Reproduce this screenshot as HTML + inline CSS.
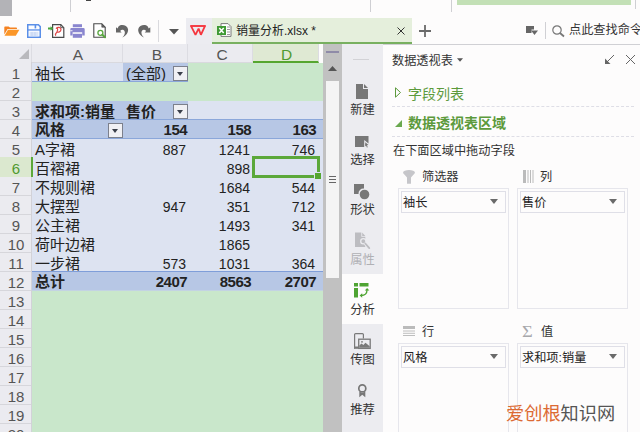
<!DOCTYPE html>
<html lang="zh-CN">
<head>
<meta charset="utf-8">
<title>销量分析.xlsx</title>
<style>
*{box-sizing:border-box;margin:0;padding:0}
html,body{width:640px;height:432px;overflow:hidden;background:#fdfcfc}
body{position:relative;font-family:"Liberation Sans","Noto Sans CJK SC",sans-serif;color:#222;font-size:12px}
.abs{position:absolute}
svg{position:absolute;overflow:visible}
/* ---------- top toolbar ---------- */
#top{left:0;top:0;width:640px;height:44px;background:#fdfcfc}
.vl{position:absolute;width:1px;background:#cfcfd3}
/* ---------- sheet ---------- */
#sheet{left:0;top:44px;width:323px;height:388px;background:#c9e7cb;overflow:hidden}
#colhead{left:0;top:0;width:323px;height:19px;background:#ebebf0;border-bottom:1px solid #d9d9de}
.ch{position:absolute;top:0;height:18px;line-height:22px;text-align:center;padding-left:2px;font-size:15.500px;color:#555;border-right:1px solid #dcdce2;overflow:hidden}
#rowhead{left:0;top:18px;width:32px;height:370px;background:#ebebf0;border-right:1px solid #d2d2d8}
.rh{position:absolute;left:0;width:31px;height:19px;line-height:22px;text-align:center;padding-left:1px;font-size:15px;color:#555;border-bottom:1px solid #d6d6db;overflow:hidden}
.row{position:absolute;left:32px;height:19px;line-height:21px;font-size:15px;white-space:nowrap}
.c{position:absolute;top:0;height:19px;padding:0 3px;overflow:hidden}
.n{text-align:right;font-size:14px;padding-right:1px;padding-top:1px}
.b{font-weight:bold}
.bn .n{font-size:15px;letter-spacing:-0.550px;padding-top:0;transform:translateX(1px)}
.lt{background:#dde3f1}
.dk{background:#b7c7e5}
.dd{position:absolute;width:15px;height:15px;top:3px;border:1px solid #7c808c;background:#f0f0f4}
.dd:after{content:"";position:absolute;left:2.700px;top:5px;border:3.800px solid transparent;border-top:4.200px solid #3a3f4a;border-bottom:0}
/* ---------- scrollbar ---------- */
#vs{left:323px;top:44px;width:19px;height:388px;background:#c1c1c1}
/* ---------- side strip ---------- */
#side{left:342px;top:44px;width:41px;height:388px;background:#ececf0}
.sl{position:absolute;left:0;width:41px;text-align:center;font-size:12.300px;line-height:14px;color:#333}
/* ---------- panel ---------- */
#panel{left:383px;top:44px;width:257px;height:388px;background:#fdfcfc;border-top:1px solid #d0d0d4}
.t12{position:absolute;font-size:12.200px;line-height:14px;color:#333;white-space:nowrap}
.g14{position:absolute;font-size:14px;line-height:16px;color:#5c9a3c;white-space:nowrap}
.dash{position:absolute;height:0;border-top:1px dashed #dedee6}
.box{position:absolute;border:1px solid #e6e6ec}
.item{position:absolute;left:2px;right:2px;top:2px;height:22px;border:1px solid #dfdfe7;font-size:12.200px;line-height:23px;padding-left:1px;color:#222}
.item:after{content:"";position:absolute;right:7px;top:7px;border:4.5px solid transparent;border-top:5px solid #6a6a6a;border-bottom:0}
</style>
</head>
<body>

<!-- ================= TOP ================= -->
<div id="top" class="abs">
  <div class="abs" style="left:0;top:0;width:12px;height:16px;background:#b3b3b7"></div>
  <div class="vl" style="left:70px;top:0;height:12px"></div>
  <div class="vl" style="left:370px;top:0;height:12px"></div>
  <div class="vl" style="left:451px;top:0;height:12px"></div>
  <div class="vl" style="left:635px;top:0;height:9px"></div>
  <div class="abs" style="left:457px;top:0;width:174px;height:5px;background:#c3e0b6"></div>
  <div class="abs" style="left:86px;top:0;width:5px;height:1px;background:#444"></div>

  <!-- folder -->
  <svg style="left:4px;top:26px" width="16" height="11" viewBox="0 0 16 11"><path d="M0.300 1.200Q0.300 0.400 1.100 0.400H4.600L6 1.600H12.200Q13 1.600 13 2.400V3H3.600L0.300 8.600z" fill="#f58220"/><path d="M4 3.700H15.400L11.800 9.800H0.500z" fill="#fb9628"/></svg>
  <!-- save -->
  <svg style="left:27px;top:24px" width="14" height="14" viewBox="0 0 14 14"><path d="M0.750 0.750H11.400L13.250 2.600V13.250H0.750z" fill="#fbfcff" stroke="#5b8fe8" stroke-width="1.500"/><rect x="0.750" y="5.300" width="12.500" height="1.300" fill="#5b8fe8"/><rect x="7.600" y="1" width="1.600" height="3.400" fill="#5b8fe8"/><rect x="2.600" y="7.800" width="8.800" height="4.400" fill="#d9e4f8"/><path d="M5 8v4M8 8v4" stroke="#c3d3f3" stroke-width="1"/></svg>
  <!-- pdf -->
  <svg style="left:48px;top:24px" width="17" height="14" viewBox="0 0 17 14"><path d="M4.600 0.700h8.200l3 3v9.600H4.600z" fill="#fff" stroke="#4a4a4a" stroke-width="1.200"/><path d="M12.800 0.700v3h3" fill="none" stroke="#4a4a4a" stroke-width="0.900"/><path d="M8.300 4.300C9.500 2.800 13 3 13 5.600 13 8 10 8.600 9 8 9.500 6.800 9.800 5.500 9.600 4.600M9 8C8 9 7 10 7.600 11.300" fill="none" stroke="#e04848" stroke-width="1.200" stroke-linecap="round"/><path d="M0 3.600h2.600V2.200l2.700 2.300-2.700 2.300V5.400H0z" fill="#4aa63c"/></svg>
  <!-- printer -->
  <svg style="left:70px;top:24px" width="15" height="14" viewBox="0 0 15 14"><rect x="2.800" y="0.200" width="9.200" height="3" fill="#8a86cf"/><path d="M1.400 3.900H13.400Q14.700 3.900 14.700 5.200V11.600H12.200V8.200H2.600V11.600H0.300V5.200Q0.300 3.900 1.400 3.900z" fill="#8a86cf"/><rect x="2.800" y="9.800" width="9.200" height="4" fill="#8a86cf"/><rect x="0.300" y="6.300" width="2.200" height="0.900" fill="#fdfcfc"/></svg>
  <!-- preview -->
  <svg style="left:93px;top:23px" width="13" height="15" viewBox="0 0 13 15"><path d="M0.800 0.800h8l3.400 3.400v10H0.800z" fill="#fff" stroke="#4a4a4a" stroke-width="1.100"/><path d="M8.800 0.800v3.400h3.400z" fill="#666" stroke="#4a4a4a" stroke-width="0.600"/><circle cx="7.400" cy="9.800" r="2.500" fill="#fff" stroke="#58a63e" stroke-width="1.300"/><path d="M9.400 11.800l2.600 2.400" stroke="#58a63e" stroke-width="2" stroke-linecap="round"/></svg>
  <!-- undo -->
  <svg style="left:116px;top:25px" width="13" height="13" viewBox="0 0 13 13"><path d="M0 2.300V7.600H5.600L4.200 5.900C5.200 4.600 7.500 4.400 8.500 6 9.500 8 8.500 10.500 6.300 12.600 10.500 10.500 12.600 7 12 4 11.300 1 7.500-.7 4.300.3 3 .8 2.300 1.600 1.600 3.400z" fill="#666"/></svg>
  <!-- redo -->
  <svg style="left:138px;top:25px" width="13" height="13" viewBox="0 0 13 13"><path transform="translate(12.300 0) scale(-1 1)" d="M0 2.300V7.600H5.600L4.200 5.900C5.200 4.600 7.500 4.400 8.500 6 9.500 8 8.500 10.500 6.300 12.600 10.500 10.500 12.600 7 12 4 11.300 1 7.500-.7 4.300.3 3 .8 2.300 1.600 1.600 3.400z" fill="#666"/></svg>
  <div class="vl" style="left:158px;top:20px;height:22px;background:#dadade"></div>
  <!-- caret -->
  <svg style="left:169px;top:29px" width="10" height="6" viewBox="0 0 10 6"><path d="M0 0h10l-5 5.500z" fill="#555"/></svg>

  <!-- wps tab -->
  <div class="abs" style="left:186px;top:18px;width:26px;height:26px;background:#ececf1"></div>
  <svg style="left:190px;top:25px" width="16" height="11" viewBox="0 0 16 11"><path d="M0.200 1H15.800" fill="none" stroke="#f5363f" stroke-width="1.900"/><path d="M1.200 1.300L5.500 9.800 8.600 3.600 10.900 9.800 14.800 1.300" fill="none" stroke="#f5363f" stroke-width="1.800" stroke-linejoin="miter" stroke-miterlimit="2"/></svg>

  <!-- file tab -->
  <div class="abs" style="left:212px;top:18px;width:200px;height:26px;background:#e5efdc;border-bottom:2px solid #78b060"></div>
  <svg style="left:217px;top:23px" width="15" height="15" viewBox="0 0 15 15"><path d="M4 0.600h7l3 3v9.800H4z" fill="#fff" stroke="#7a7a7a" stroke-width="1"/><path d="M10 4h3M10 6.500h3M10 9h3M10 11.500h3" stroke="#9a9a9a" stroke-width="1"/><rect x="0" y="3" width="9" height="9" fill="#3f9a34"/><path d="M2.300 5l4.400 5M6.700 5l-4.400 5" stroke="#fff" stroke-width="1.500"/></svg>
  <div class="abs" style="left:236px;top:23px;font-size:12px;line-height:17px;color:#222;white-space:nowrap">销量分析.xlsx *</div>
  <svg style="left:397px;top:27px" width="8" height="8" viewBox="0 0 8 8"><path d="M0.500 0.500l7 7M7.500 0.500l-7 7" stroke="#333" stroke-width="1"/></svg>
  <!-- plus -->
  <svg style="left:419px;top:25px" width="12" height="12" viewBox="0 0 12 12"><path d="M6 0v12M0 6h12" stroke="#6a6a6a" stroke-width="1.800"/></svg>

  <!-- right side -->
  <svg style="left:526px;top:26px" width="12" height="9" viewBox="0 0 12 9"><path d="M0 0h8v3.500H5.500V7H0z" fill="#666"/><path d="M5 4.500h7L8.500 9z" fill="#666"/></svg>
  <div class="vl" style="left:545px;top:22px;height:17px;background:#d0d0d4"></div>
  <svg style="left:552px;top:25px" width="13" height="12" viewBox="0 0 13 12"><circle cx="5" cy="5" r="4.200" fill="none" stroke="#777" stroke-width="1.200"/><path d="M8 8l4 3.500" stroke="#777" stroke-width="1.800"/></svg>
  <div class="t12" style="left:569px;top:23px;color:#333">点此查找命令</div>
</div>

<!-- ================= SHEET ================= -->
<div id="sheet" class="abs">
  <div id="colhead" class="abs">
    <div class="ch" style="left:0;width:32px"></div>
    <div class="ch" style="left:32px;width:91px">A</div>
    <div class="ch" style="left:123px;width:65px;padding-left:4px">B</div>
    <div class="ch" style="left:188px;width:65px;padding-left:4px">C</div>
    <div class="ch" style="left:253px;width:66px;background:#dfe9d3;color:#4f9a2f;border-bottom:2px solid #55a630;height:19px">D</div>
    <div class="abs" style="left:319px;top:0;width:4px;height:19px;background:#fdfcfc"></div>
    <svg style="left:19px;top:5px" width="10" height="10" viewBox="0 0 10 10"><path d="M10 0v10H0z" fill="#b9b9bd"/></svg>
  </div>

  <div id="rowhead" class="abs">
    <div class="rh" style="top:1px">1</div>
    <div class="rh" style="top:20px">2</div>
    <div class="rh" style="top:39px">3</div>
    <div class="rh" style="top:58px">4</div>
    <div class="rh" style="top:77px">5</div>
    <div class="rh" style="top:95px;height:20px;line-height:24px;background:#dbe8cf;color:#4f9a2f;border-bottom:0">6</div>
    <div class="rh" style="top:115px">7</div>
    <div class="rh" style="top:134px">8</div>
    <div class="rh" style="top:153px">9</div>
    <div class="rh" style="top:172px">10</div>
    <div class="rh" style="top:191px">11</div>
    <div class="rh" style="top:210px">12</div>
    <div class="rh" style="top:229px">13</div>
    <div class="rh" style="top:248px">14</div>
    <div class="rh" style="top:267px">15</div>
    <div class="rh" style="top:286px">16</div>
    <div class="rh" style="top:305px">17</div>
    <div class="rh" style="top:324px">18</div>
    <div class="rh" style="top:343px">19</div>
    <div class="rh" style="top:362px">20</div>
  </div>

  <!-- row 1 -->
  <div class="row" style="top:19px;width:156px">
    <div class="c lt" style="left:0;width:91px;border-bottom:1px solid #8ba7da">袖长</div>
    <div class="c dk" style="left:91px;width:65px;border-bottom:1px solid #8ba7da">(全部)<span class="dd" style="left:50px"></span></div>
  </div>
  <!-- row 3 -->
  <div class="row b" style="top:57px;width:291px">
    <div class="c dk" style="left:0;width:91px">求和项:销量</div>
    <div class="c dk" style="left:91px;width:65px">售价<span class="dd" style="left:50px"></span></div>
    <div class="c lt" style="left:156px;width:135px"></div>
  </div>
  <!-- row 4 -->
  <div class="row b dk bn" style="top:75px;height:20px;width:291px;border-top:1px solid #8ba7da;border-bottom:1px solid #8ba7da;line-height:20px">
    <div class="c" style="left:0;width:91px">风格<span class="dd" style="left:76px;top:3px"></span></div>
    <div class="c n" style="left:91px;width:65px;padding-right:2px">154</div>
    <div class="c n" style="left:156px;width:65px;padding-right:3px">158</div>
    <div class="c n" style="left:221px;width:70px;padding-right:8px">163</div>
  </div>
  <!-- rows 5-11 -->
  <div class="row lt" style="top:95px;width:291px"><div class="c" style="left:0;width:91px">A字裙</div><div class="c n" style="left:91px;width:65px;padding-right:2px">887</div><div class="c n" style="left:156px;width:65px;padding-right:3px">1241</div><div class="c n" style="left:221px;width:70px;padding-right:8px">746</div></div>
  <div class="row lt" style="top:114px;width:291px"><div class="c" style="left:0;width:91px">百褶裙</div><div class="c n" style="left:156px;width:65px;padding-right:3px">898</div></div>
  <div class="row lt" style="top:133px;width:291px"><div class="c" style="left:0;width:91px">不规则裙</div><div class="c n" style="left:156px;width:65px;padding-right:3px">1684</div><div class="c n" style="left:221px;width:70px;padding-right:8px">544</div></div>
  <div class="row lt" style="top:152px;width:291px"><div class="c" style="left:0;width:91px">大摆型</div><div class="c n" style="left:91px;width:65px;padding-right:2px">947</div><div class="c n" style="left:156px;width:65px;padding-right:3px">351</div><div class="c n" style="left:221px;width:70px;padding-right:8px">712</div></div>
  <div class="row lt" style="top:171px;width:291px"><div class="c" style="left:0;width:91px">公主裙</div><div class="c n" style="left:156px;width:65px;padding-right:3px">1493</div><div class="c n" style="left:221px;width:70px;padding-right:8px">341</div></div>
  <div class="row lt" style="top:190px;width:291px"><div class="c" style="left:0;width:91px">荷叶边裙</div><div class="c n" style="left:156px;width:65px;padding-right:3px">1865</div></div>
  <div class="row lt" style="top:209px;width:291px"><div class="c" style="left:0;width:91px">一步裙</div><div class="c n" style="left:91px;width:65px;padding-right:2px">573</div><div class="c n" style="left:156px;width:65px;padding-right:3px">1031</div><div class="c n" style="left:221px;width:70px;padding-right:8px">364</div></div>
  <!-- row 12 -->
  <div class="row b dk bn" style="top:227px;height:20px;width:291px;border-top:1px solid #7f9ed9;border-bottom:1px solid #c3d3e3;line-height:20px">
    <div class="c" style="left:0;width:91px">总计</div>
    <div class="c n" style="left:91px;width:65px;padding-right:2px">2407</div>
    <div class="c n" style="left:156px;width:65px;padding-right:3px">8563</div>
    <div class="c n" style="left:221px;width:70px;padding-right:8px">2707</div>
  </div>

  <!-- selection D6 -->
  <div class="abs" style="left:31px;top:113px;width:2px;height:20px;background:#5ba83a"></div>
  <div class="abs" style="left:252px;top:112px;width:68px;height:22px;border:3px solid #5ba83a"></div>
  <div class="abs" style="left:314px;top:128px;width:7px;height:7px;background:#55a630;border:1px solid #dde3f1;border-right:0;border-bottom:0"></div>
</div>

<!-- ================= V SCROLL ================= -->
<div id="vs" class="abs">
  <div class="abs" style="left:3px;top:7px;width:13px;height:2px;background:#8f8ba8"></div>
  <svg style="left:5px;top:22px" width="9" height="5" viewBox="0 0 9 5"><path d="M0 5h9L4.500 0z" fill="#555"/></svg>
  <div class="abs" style="left:3px;top:37px;width:13px;height:197px;background:#f4f4f4"></div>
  <div class="abs" style="left:6px;top:132px;width:7px;height:1px;background:#666;box-shadow:0 3px 0 #666,0 6px 0 #666"></div>
</div>

<!-- ================= SIDE STRIP ================= -->
<div id="side" class="abs">
  <div class="abs" style="left:11px;top:15px;width:16px;height:1px;background:#d2d2d6"></div>
  <div class="abs" style="left:0;top:230px;width:41px;height:50px;background:#fdfcfc"></div>

  <!-- 新建 -->
  <svg style="left:14px;top:40px" width="12" height="15" viewBox="0 0 12 15"><path d="M0 0h7v5h5v10H0z" fill="#777"/><path d="M8 0l4 4H8z" fill="#777"/></svg>
  <div class="sl" style="top:59px">新建</div>
  <!-- 选择 -->
  <svg style="left:13px;top:92px" width="14" height="12" viewBox="0 0 14 12"><path d="M0 0h13.500v7.500L9.200 4v7H0z" fill="#777"/><path d="M10.300 6.200l3.200 2.800-1.600.2.900 2-.9.400-.9-2-1 .9z" fill="#777"/></svg>
  <div class="sl" style="top:109px">选择</div>
  <!-- 形状 -->
  <svg style="left:12px;top:140px" width="16" height="16" viewBox="0 0 16 16"><path d="M0 0h10v4.500a5 5 0 0 0-5.500 5.500H0z" fill="#777"/><circle cx="10.500" cy="10.500" r="4.800" fill="#777"/></svg>
  <div class="sl" style="top:159px">形状</div>
  <!-- 属性 -->
  <svg style="left:13px;top:188px" width="16" height="18" viewBox="0 0 16 18"><path d="M0 0.500H6.300V4.800H10.300V15H0z" fill="#bdbdc1"/><path d="M7.200 0.500L10.300 3.900H7.200z" fill="#bdbdc1"/><circle cx="8.300" cy="9.300" r="2.600" fill="#bdbdc1" stroke="#ececf0" stroke-width="1.300"/><path d="M10.200 11.400l4 4.600" stroke="#ececf0" stroke-width="3.400"/><path d="M10.300 11.500l4 4.600" stroke="#bdbdc1" stroke-width="1.800" stroke-linecap="round"/></svg>
  <div class="sl" style="top:209px;color:#b0b0b4">属性</div>
  <!-- 分析 -->
  <svg style="left:12px;top:239px" width="16" height="15" viewBox="0 0 16 15"><rect x="0" y="0" width="4" height="3.500" fill="#4fa433"/><rect x="5.500" y="0" width="9" height="3.500" fill="#4fa433"/><rect x="0" y="5" width="4" height="9.500" fill="#4fa433"/><path d="M7 12.500c3.500 0 6-2 6-5.500" fill="none" stroke="#4fa433" stroke-width="1.300"/><path d="M10.800 7.600l2.300-2.600 2.200 2.600z" fill="#4fa433"/><path d="M8.200 10.200l-2.600 2.300 2.600 2.200z" fill="#4fa433"/></svg>
  <div class="sl" style="top:259px">分析</div>
  <!-- 传图 -->
  <svg style="left:12px;top:289px" width="17" height="16" viewBox="0 0 17 16"><path d="M0.600 15.500V1.600a1 1 0 0 1 1-1h6.800a1 1 0 0 1 1 1V5.500" fill="none" stroke="#7a7a7a" stroke-width="1.200"/><path d="M0 13.500h4.500v2.300H0z" fill="#7a7a7a"/><rect x="4.700" y="6.200" width="11.500" height="9.200" fill="#ececf0" stroke="#7a7a7a" stroke-width="1.300"/><path d="M5.300 14.800v-2.300l2.200-2 1.800 1.500 2.200-2.300 4.200 3.500v1.600z" fill="#7a7a7a"/><circle cx="8" cy="8.800" r="0.900" fill="#7a7a7a"/></svg>
  <div class="sl" style="top:309px">传图</div>
  <!-- 推荐 -->
  <svg style="left:15px;top:340px" width="11" height="14" viewBox="0 0 11 14"><circle cx="5.300" cy="4.400" r="3.500" fill="none" stroke="#777" stroke-width="1.700"/><path d="M2.300 7.600V13.200L5.300 10.800 8.300 13.200V7.600L5.300 9z" fill="#777"/></svg>
  <div class="sl" style="top:359px">推荐</div>
</div>

<!-- ================= PANEL ================= -->
<div id="panel" class="abs">
  <div class="t12" style="left:9px;top:9px">数据透视表</div>
  <svg style="left:74px;top:13px" width="6" height="4" viewBox="0 0 6 4"><path d="M0 0.300h6L3 3.800z" fill="#555"/></svg>
  <svg style="left:222px;top:10px" width="9" height="9" viewBox="0 0 9 9"><path d="M9 0L2 7" stroke="#666" stroke-width="1"/><path d="M0 9V3.500L5.500 9z" fill="#666"/></svg>
  <svg style="left:243px;top:10px" width="9" height="9" viewBox="0 0 9 9"><path d="M0 0l9 9M9 0L0 9" stroke="#666" stroke-width="1"/></svg>

  <svg style="left:12px;top:42px" width="6" height="11" viewBox="0 0 6 11"><path d="M0.500 0.800v9.400L5.500 5.500z" fill="none" stroke="#5c9a3c" stroke-width="1"/></svg>
  <div class="g14" style="left:25px;top:41px">字段列表</div>
  <div class="dash" style="left:9px;top:61px;width:242px"></div>

  <svg style="left:12px;top:75px" width="7" height="7" viewBox="0 0 7 7"><path d="M7 0v7H0z" fill="#6aa84f"/></svg>
  <div class="g14 b" style="left:25px;top:70px">数据透视表区域</div>
  <div class="dash" style="left:9px;top:91px;width:242px"></div>

  <div class="t12" style="left:10px;top:99px">在下面区域中拖动字段</div>

  <!-- filter -->
  <svg style="left:20px;top:125px" width="12" height="14" viewBox="0 0 12 14"><ellipse cx="6" cy="2.600" rx="5.900" ry="2.500" fill="#c6c6ca"/><path d="M0.300 3.200L4 7.500v6.300h4V7.500l3.700-4.300z" fill="#c6c6ca"/></svg>
  <div class="t12" style="left:39px;top:125px">筛选器</div>
  <div class="box" style="left:15px;top:143px;width:111px;height:121px"><div class="item">袖长</div></div>

  <!-- column -->
  <svg style="left:140px;top:125px" width="11" height="13" viewBox="0 0 11 13"><path d="M1.500 0v13" stroke="#bbb" stroke-width="3"/><path d="M5 0v13M7.500 0v13M10 0v13" stroke="#bbb" stroke-width="1"/></svg>
  <div class="t12" style="left:157px;top:125px">列</div>
  <div class="box" style="left:134px;top:143px;width:111px;height:121px"><div class="item">售价</div></div>

  <!-- row -->
  <svg style="left:20px;top:281px" width="12" height="10" viewBox="0 0 13 10" preserveAspectRatio="none"><path d="M0 1.500h13" stroke="#bbb" stroke-width="3"/><path d="M0 5h13M0 7.300h13M0 9.500h13" stroke="#bbb" stroke-width="1"/></svg>
  <div class="t12" style="left:39px;top:280px">行</div>
  <div class="box" style="left:15px;top:298px;width:111px;height:121px"><div class="item">风格</div></div>

  <!-- value -->
  <div class="t12" style="left:139px;top:279px;font-family:'Liberation Serif',serif;font-size:16px;color:#a8a8ac;line-height:16px;transform:scaleX(1.150);transform-origin:0 0">Σ</div>
  <div class="t12" style="left:158px;top:280px">值</div>
  <div class="box" style="left:134px;top:298px;width:111px;height:121px"><div class="item">求和项:销量</div></div>

  <!-- watermark -->
  <div class="abs" style="left:123px;top:358px;font-size:18.200px;line-height:22px;white-space:nowrap;color:#555"><span style="color:#dc6a34">爱创根</span>知识网</div>
</div>

</body>
</html>
